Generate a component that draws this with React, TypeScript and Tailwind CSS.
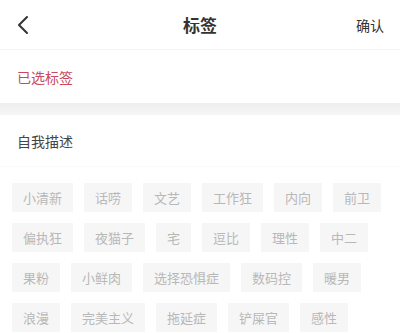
import React from "react";

const rows = [
  ["小清新", "话唠", "文艺", "工作狂", "内向", "前卫"],
  ["偏执狂", "夜猫子", "宅", "逗比", "理性", "中二"],
  ["果粉", "小鲜肉", "选择恐惧症", "数码控", "暖男"],
  ["浪漫", "完美主义", "拖延症", "铲屎官", "感性"],
];

export default function App() {
  return (
    <div
      className="w-[400px] h-[333px] overflow-hidden bg-white"
      style={{ fontFamily: '"Noto Sans CJK SC", "Noto Sans", sans-serif' }}
    >
      <div className="h-[50px] flex items-center justify-between px-[15px] relative border-b border-[#f4f4f4]">
        <svg width="14" height="20" viewBox="0 0 14 20" className="ml-[1px]">
          <path d="M11 2 L3 10 L11 18" fill="none" stroke="#333" strokeWidth="2" strokeLinecap="round" strokeLinejoin="round" />
        </svg>
        <div className="absolute left-0 right-0 text-center text-[17px] font-semibold text-[#333] pointer-events-none leading-none">标签</div>
        <div className="text-[14px] text-[#333] mr-[1px] leading-none">确认</div>
      </div>
      <div className="h-[53px] flex items-center px-[17px]">
        <span className="text-[14px] text-[#c84a5c] leading-none">已选标签</span>
      </div>
      <div className="h-[12px] bg-gradient-to-b from-[#eeeeee] to-[#f6f6f6]" />
      <div className="h-[52px] flex items-center px-[17px] border-b border-[#fafafa]">
        <span className="text-[14px] text-[#444] leading-none">自我描述</span>
      </div>
      <div className="flex flex-col gap-[11px] pl-[12px] pt-[16px]">
        {rows.map((row, i) => (
          <div key={i} className="flex gap-[11px]">
            {row.map((t) => (
              <div
                key={t}
                className="h-[29px] px-[11px] flex items-center bg-[#f6f6f6] text-[13px] text-[#b8b8b8] leading-none"
              >
                {t}
              </div>
            ))}
          </div>
        ))}
      </div>
    </div>
  );
}
